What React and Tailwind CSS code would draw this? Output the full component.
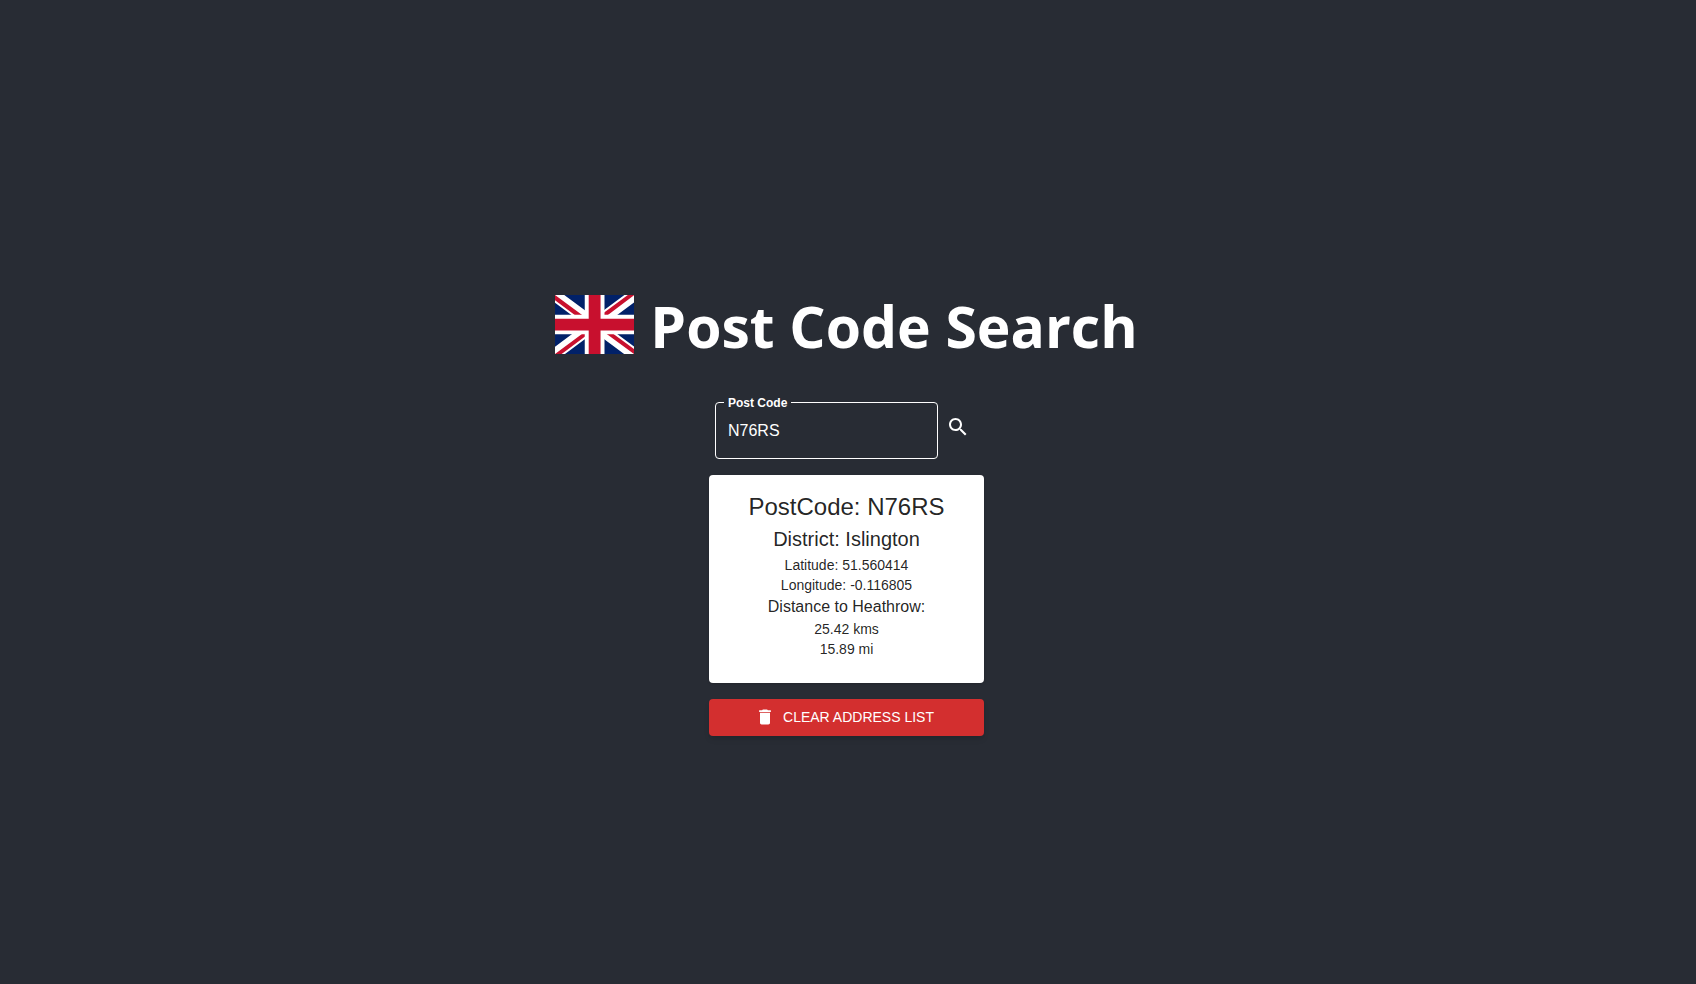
import { useState } from "react";

function UnionFlag() {
  return (
    <svg viewBox="0 0 640 480" className="h-[59px] w-[79px] shrink-0" preserveAspectRatio="none" aria-hidden="true">
      <path fill="#012169" d="M0 0h640v480H0z" />
      <path fill="#FFF" d="m75 0 244 181L562 0h78v62L400 241l240 178v61h-80L320 301 81 480H0v-60l239-178L0 64V0z" />
      <path fill="#C8102E" d="m424 281 216 159v40L369 281zm-184 20 6 35L54 480H0zM640 0v3L391 191l2-44L590 0zM0 0l239 176h-60L0 42z" />
      <path fill="#FFF" d="M241 0v480h160V0zM0 160v160h640V160z" />
      <path fill="#C8102E" d="M0 193v96h640v-96zM273 0v480h96V0z" />
    </svg>
  );
}

function SearchIcon() {
  return (
    <svg viewBox="0 0 24 24" className="size-6" fill="currentColor" aria-hidden="true">
      <path d="M15.5 14h-.79l-.28-.27C15.41 12.59 16 11.11 16 9.5 16 5.91 13.09 3 9.5 3S3 5.91 3 9.5 5.91 16 9.5 16c1.61 0 3.09-.59 4.23-1.57l.27.28v.79l5 4.99L20.49 19l-4.99-5zm-6 0C7.01 14 5 11.99 5 9.5S7.01 5 9.5 5 14 7.01 14 9.5 11.99 14 9.5 14z" />
    </svg>
  );
}

function DeleteIcon() {
  return (
    <svg viewBox="0 0 24 24" className="size-5" fill="currentColor" aria-hidden="true">
      <path d="M6 19c0 1.1.9 2 2 2h8c1.1 0 2-.9 2-2V7H6v12zM19 4h-3.5l-1-1h-5l-1 1H5v2h14V4z" />
    </svg>
  );
}

export default function App() {
  const [postCode, setPostCode] = useState("N76RS");

  return (
    <main className="flex min-h-screen flex-col items-center justify-center bg-[#282c34] pt-[46px] pr-[3px] font-['Liberation_Sans',Arial,sans-serif] text-white">
      <h1 className="flex items-start gap-4 font-['Open_Sans','Noto_Sans',sans-serif] text-[57px] leading-[62px] font-bold">
        <UnionFlag />
        Post Code Search
      </h1>

      <div className="mt-[38px] flex w-[275px] flex-col gap-4">
        <form className="flex items-center pl-1.5" onSubmit={(e) => e.preventDefault()}>
          <fieldset className="h-16 w-[223px] rounded border border-white px-2">
            <legend className="px-1 text-xs font-bold">
              <label htmlFor="postcode">Post Code</label>
            </legend>
            <input
              id="postcode"
              className="block h-10 w-full bg-transparent px-1 text-base outline-none"
              value={postCode}
              onChange={(e) => setPostCode(e.target.value)}
            />
          </fieldset>
          <button type="submit" aria-label="Search" className="rounded-full p-2">
            <SearchIcon />
          </button>
        </form>

        <section className="rounded bg-white p-4 pb-6 text-center text-sm leading-5 text-black/87 shadow">
          <h2 className="text-2xl leading-8">PostCode: N76RS</h2>
          <h3 className="text-xl leading-8">District: Islington</h3>
          <p>Latitude: 51.560414</p>
          <p>Longitude: -0.116805</p>
          <p className="text-base leading-6">Distance to Heathrow:</p>
          <p>25.42 kms</p>
          <p>15.89 mi</p>
        </section>

        <button
          type="button"
          className="flex h-[37px] items-center justify-center gap-2 rounded bg-[#d32f2f] pr-5 pl-4 text-sm font-medium uppercase shadow-md"
        >
          <DeleteIcon />
          Clear address list
        </button>
      </div>
    </main>
  );
}
